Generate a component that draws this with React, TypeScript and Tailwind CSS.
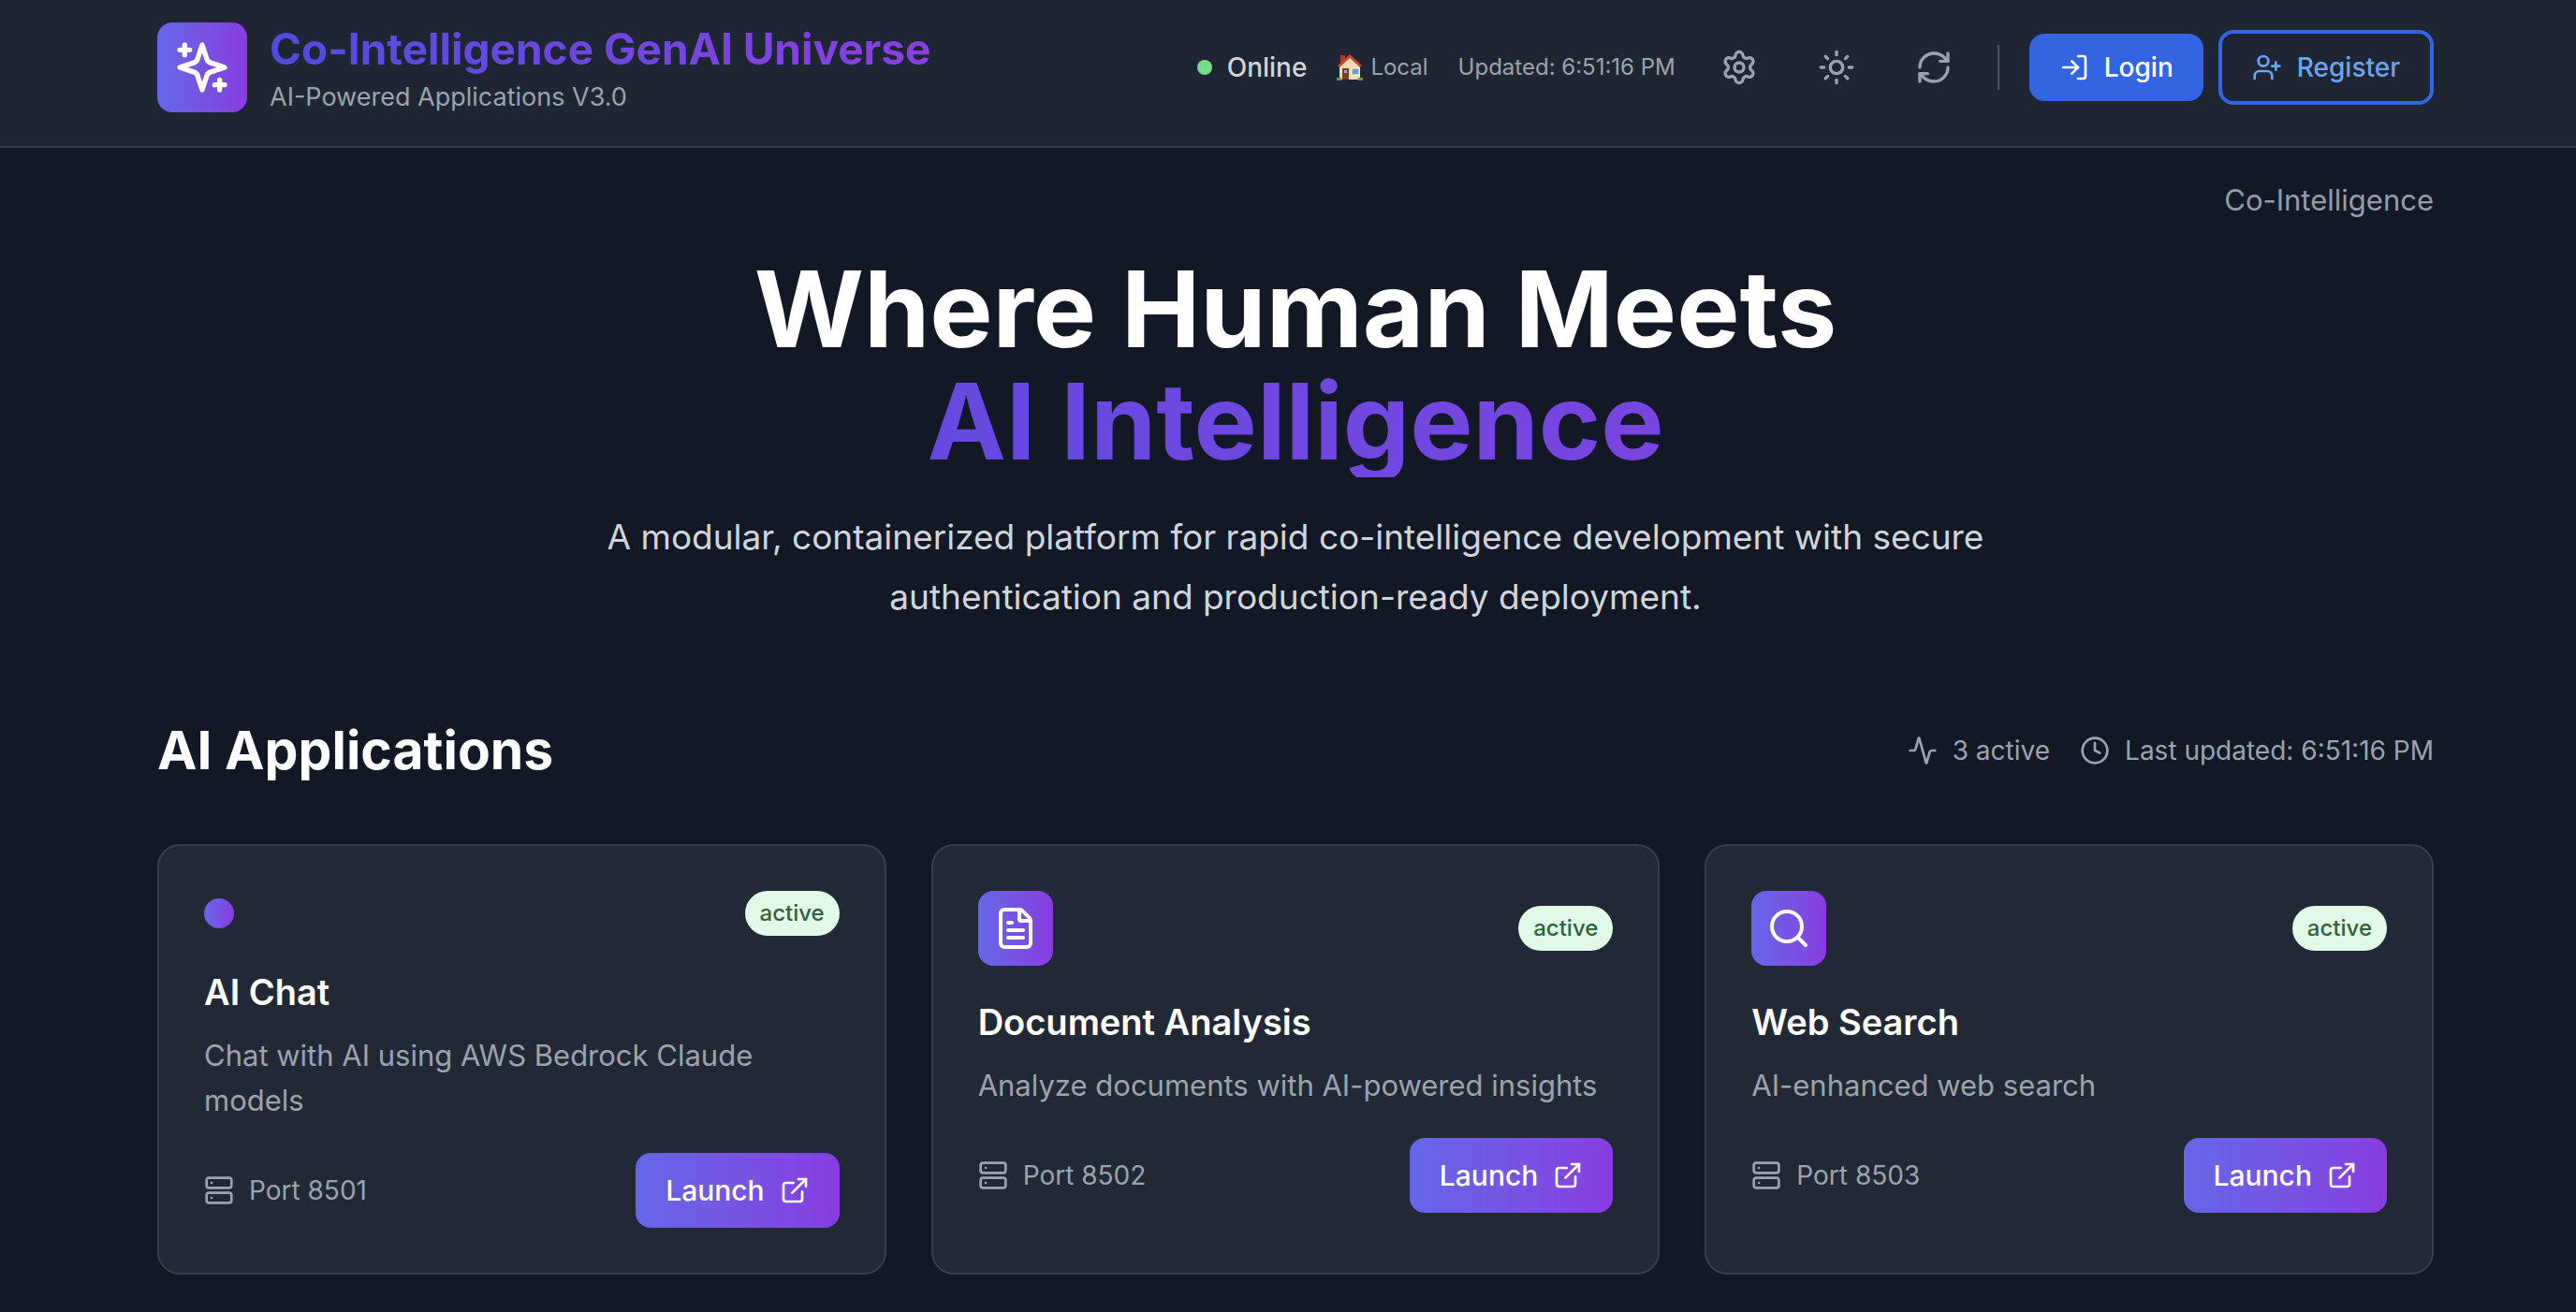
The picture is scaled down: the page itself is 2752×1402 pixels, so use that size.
import { Activity, Clock, ExternalLink, FileText, LogIn, RefreshCw, Search, Server, Settings, Sun, UserPlus } from "lucide-react";
import type { ReactNode } from "react";

const GRAD = "bg-linear-to-r from-[#6366e8] to-[#873ce0]";
const TEXT_GRAD = "bg-linear-to-r from-[#4f4cdf] to-[#8b3ee1] bg-clip-text text-transparent";

function Container({ children, className = "" }: { children: ReactNode; className?: string }) {
  return (
    <div className="pl-4">
      <div className={`mx-auto max-w-[2560px] px-16 ${className}`}>{children}</div>
    </div>
  );
}

function Sparkles() {
  return (
    <svg viewBox="0 0 24 24" className="size-16" fill="none" stroke="currentColor" strokeWidth="2" strokeLinecap="round" strokeLinejoin="round" aria-hidden="true">
      <path d="m12 3-1.912 5.813a2 2 0 0 1-1.275 1.275L3 12l5.813 1.912a2 2 0 0 1 1.275 1.275L12 21l1.912-5.813a2 2 0 0 1 1.275-1.275L21 12l-5.813-1.912a2 2 0 0 1-1.275-1.275L12 3Z" />
      <path d="M5 3v4M19 17v4M3 5h4M17 19h4" />
    </svg>
  );
}

function House() {
  return (
    <svg viewBox="0 0 28 28" className="size-7" aria-hidden="true">
      <path d="M4 1h5v9H4z" fill="#a83b2c" />
      <path d="M3 12 14 2l11 10v15H3z" fill="#ecdcb4" />
      <path d="M14 0 1 12l2 2L14 4l11 10 2-2z" fill="#c4483a" />
      <path d="M6 15h7v12H6z" fill="#7a4028" />
      <path d="M8 17h3v3H8z" fill="#8fb6d8" />
      <path d="M16 15h8v7h-8z" fill="#6c9fd0" stroke="#fff8e6" />
      <path d="M0 25h5v3H0zM23 25h5v3h-5z" fill="#6d9a3c" />
    </svg>
  );
}

type App = { name: string; text: string; port: number; icon?: ReactNode };

const apps: App[] = [
  { name: "AI Chat", text: "Chat with AI using AWS Bedrock Claude models", port: 8501 },
  { name: "Document Analysis", text: "Analyze documents with AI-powered insights", port: 8502, icon: <FileText size={48} /> },
  { name: "Web Search", text: "AI-enhanced web search", port: 8503, icon: <Search size={48} /> },
];

function AppCard({ app }: { app: App }) {
  return (
    <article className="rounded-3xl border-2 border-[#373e4b] bg-[#222936] p-12">
      <div className="flex items-center justify-between">
        {app.icon ? (
          <div className={`rounded-2xl p-4 text-white ${GRAD}`}>{app.icon}</div>
        ) : (
          <div className={`size-8 rounded-full ${GRAD}`} />
        )}
        <span className="rounded-full bg-[#e1fae8] px-4 py-2 text-[24px] leading-8 font-medium text-[#2f6439]">active</span>
      </div>
      <h3 className="mt-8 text-[38px] leading-14 font-semibold text-white">{app.name}</h3>
      <p className="mt-4 text-[31px] leading-12 text-[#9ca3af]">{app.text}</p>
      <div className="mt-8 flex items-center justify-between">
        <span className="flex items-center gap-4 text-[28px] leading-10 text-[#9ca3af]">
          <Server size={32} />
          Port {app.port}
        </span>
        <button type="button" className={`flex items-center gap-4 rounded-2xl px-8 py-4 text-[30px] leading-12 font-medium text-white ${GRAD}`}>
          Launch
          <ExternalLink size={32} />
        </button>
      </div>
    </article>
  );
}

function IconButton({ label, children }: { label: string; children: ReactNode }) {
  return (
    <button type="button" aria-label={label} className="rounded-2xl p-4 text-[#9ca3af]">
      {children}
    </button>
  );
}

export default function App() {
  return (
    <div className="min-h-screen bg-[#121826] font-['Inter',sans-serif]">
      <header className="border-b-2 border-[#373e4b] bg-[#1f2633]">
        <Container className="flex items-center justify-between pt-5 pb-8">
          <div className="flex items-center gap-6">
            <div className={`rounded-2xl p-4 text-white ${GRAD}`}>
              <Sparkles />
            </div>
            <div>
              <h1 className={`text-[46px] leading-16 font-bold ${TEXT_GRAD}`}>Co-Intelligence GenAI Universe</h1>
              <p className="text-[27px] leading-10 text-[#9ca3af]">AI-Powered Applications V3.0</p>
            </div>
          </div>
          <div className="flex items-center gap-8">
            <span className="flex items-center gap-4 text-[28px] leading-10 font-medium text-[#d1d5db]">
              <span className="size-4 rounded-full bg-[#77dc87]" />
              Online
            </span>
            <span className="flex items-center gap-2 text-[24px] leading-8 text-[#9ca3af]">
              <House />
              Local
            </span>
            <span className="text-[24px] leading-8 text-[#9ca3af]">Updated: 6:51:16 PM</span>
            <IconButton label="Settings"><Settings size={40} /></IconButton>
            <IconButton label="Light mode"><Sun size={40} /></IconButton>
            <IconButton label="Refresh"><RefreshCw size={40} /></IconButton>
            <div className="h-12 w-0.5 bg-[#4b5563]" />
            <div className="flex items-center gap-4">
              <button type="button" className="flex items-center gap-4 rounded-2xl bg-[#3365e3] px-8 py-4 text-[28px] leading-10 font-medium text-white">
                <LogIn size={32} />
                Login
              </button>
              <button type="button" className="flex items-center gap-4 rounded-2xl border-4 border-[#3365e3] px-8 py-4 text-[28px] leading-10 font-medium text-[#6ca4f2]">
                <UserPlus size={32} />
                Register
              </button>
            </div>
          </div>
        </Container>
      </header>
      <main>
        <Container className="pt-8 pb-10">
          <p className="text-right text-[31px] leading-12 text-[#969ca8]">Co-Intelligence</p>
          <section className="mt-8 text-center">
            <h2 className="text-[113px] leading-[120px] font-bold text-white">
              Where Human Meets
              <span className={`block ${TEXT_GRAD}`}>AI Intelligence</span>
            </h2>
            <p className="mx-auto mt-8 max-w-[1536px] text-[37px] leading-16 text-[#d1d5db]">
              A modular, containerized platform for rapid co-intelligence development with secure authentication and production-ready deployment.
            </p>
          </section>
          <section className="mt-24">
            <div className="flex items-center justify-between">
              <h2 className="text-[57px] leading-18 font-bold text-white">AI Applications</h2>
              <div className="flex items-center gap-8 text-[28px] leading-10 text-[#9ca3af]">
                <span className="flex items-center gap-4"><Activity size={32} />3 active</span>
                <span className="flex items-center gap-4"><Clock size={32} />Last updated: 6:51:16 PM</span>
              </div>
            </div>
            <div className="mt-16 grid grid-cols-3 gap-12">
              {apps.map((app) => <AppCard key={app.port} app={app} />)}
            </div>
          </section>
        </Container>
      </main>
    </div>
  );
}
